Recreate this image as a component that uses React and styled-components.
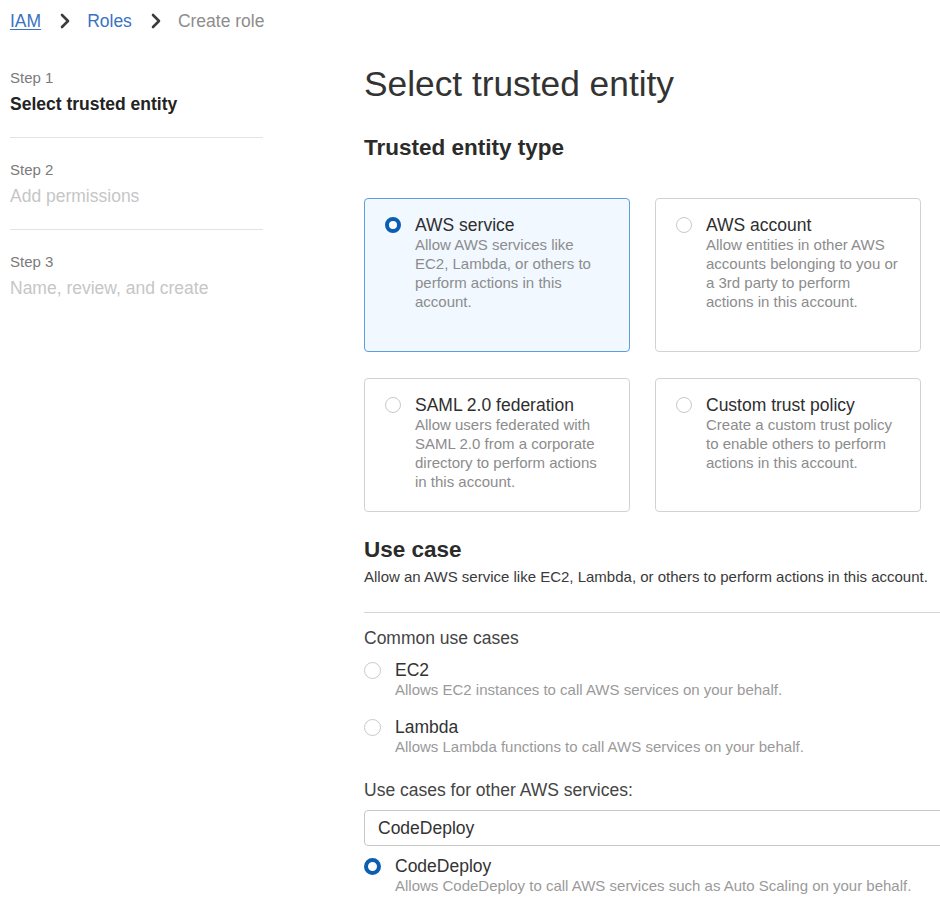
import React from "react";
import styled, { createGlobalStyle } from "styled-components";

const Global = createGlobalStyle`
  html, body { margin: 0; padding: 0; background: #fff; overflow: hidden; }
  body { font-family: "Liberation Sans", Arial, sans-serif; color: #333; }
  * { box-sizing: border-box; }
`;

const Page = styled.div`
  width: 980px;
  padding: 10px 0 0 10px;
`;

const Breadcrumbs = styled.nav`
  display: flex;
  align-items: center;
  height: 22px;
  font-size: 17.5px;
  line-height: 22px;
`;

const Crumb = styled.a`
  color: #3a73c4;
  text-decoration: ${(p) => (p.$underline ? "underline" : "none")};
  text-underline-offset: 2px;
`;

const CrumbCurrent = styled.span`
  color: #8d8d8d;
`;

const Chevron = styled.svg`
  width: 14px;
  height: 16px;
  margin: 0 15px 0 17px;
  flex: none;
`;

const Content = styled.div`
  display: flex;
  margin-top: 28px;
`;

const SideNav = styled.div`
  width: 253px;
  flex: none;
  padding-top: 8px;
`;

const StepBlock = styled.div`
  padding-bottom: 22px;
  border-bottom: ${(p) => (p.$last ? "none" : "1px solid #e3e3e3")};
  margin-bottom: 22px;
`;

const StepNum = styled.div`
  font-size: 15px;
  line-height: 20px;
  color: #7b7b7b;
`;

const StepTitle = styled.div`
  margin-top: 5px;
  font-size: 17.5px;
  line-height: 22px;
  font-weight: ${(p) => (p.$active ? 700 : 400)};
  color: ${(p) => (p.$active ? "#232323" : "#c6c6c6")};
`;

const Main = styled.main`
  margin-left: 101px;
  width: 620px;
  flex: none;
`;

const PageTitle = styled.h1`
  margin: 4px 0 0;
  font-size: 35.3px;
  line-height: 40px;
  font-weight: 400;
  color: #333;
`;

const SectionTitle = styled.h2`
  margin: ${(p) => p.$mt}px 0 0;
  font-size: 22.5px;
  line-height: 28px;
  font-weight: 700;
  color: #2b2b2b;
`;

const CardGrid = styled.div`
  margin-top: 36px;
  display: grid;
  grid-template-columns: 266px 266px;
  grid-template-rows: 154px 134px;
  column-gap: 25px;
  row-gap: 26px;
`;

const Card = styled.div`
  display: flex;
  gap: 14px;
  padding: 16px 20px 0 20px;
  border: 1px solid ${(p) => (p.$selected ? "#5e9ddf" : "#d2d2d2")};
  border-radius: 4px;
  background: ${(p) => (p.$selected ? "#f1f8ff" : "#fff")};
`;

const RadioDot = styled.span`
  flex: none;
  width: ${(p) => p.$size}px;
  height: ${(p) => p.$size}px;
  margin-top: 2px;
  border-radius: 50%;
  border: ${(p) => (p.$checked ? "4.5px solid #0b5eb2" : "1.5px solid #c9c9c9")};
  background: #fff;
`;

const CardText = styled.div`
  display: flex;
  flex-direction: column;
  width: 194px;
`;

const CardTitle = styled.div`
  font-size: 17.5px;
  line-height: 20px;
  color: #2e2e2e;
`;

const CardDesc = styled.div`
  font-size: 15px;
  line-height: 19px;
  color: #8c8c8c;
`;

const Description = styled.p`
  margin: 3px 0 0;
  font-size: 15px;
  line-height: 20px;
  color: #3a3a3a;
`;

const Divider = styled.hr`
  margin: 25px 0 0;
  border: none;
  border-top: 1px solid #d4d4d4;
`;

const GroupLabel = styled.div`
  margin-top: ${(p) => p.$mt}px;
  font-size: 17.5px;
  line-height: 22px;
  color: #444;
`;

const Option = styled.div`
  display: flex;
  gap: 14px;
  margin-top: ${(p) => p.$mt}px;
`;

const OptionLabel = styled.div`
  font-size: 17.5px;
  line-height: 20px;
  color: #333;
`;

const OptionDesc = styled.div`
  font-size: 15px;
  line-height: 20px;
  color: #9a9a9a;
`;

const Input = styled.div`
  margin-top: 9px;
  height: 36px;
  display: flex;
  align-items: center;
  padding-left: 13px;
  border: 1px solid #c7c7c7;
  border-radius: 4px;
  font-size: 17.5px;
  color: #333;
`;

const ChevronIcon = () => (
  <Chevron viewBox="0 0 14 16">
    <path d="M4 2 L10 8 L4 14" fill="none" stroke="#3c3c3c" strokeWidth="2.6" strokeLinecap="round" strokeLinejoin="round" />
  </Chevron>
);

const cards = [
  { title: "AWS service", desc: "Allow AWS services like EC2, Lambda, or others to perform actions in this account.", selected: true },
  { title: "AWS account", desc: "Allow entities in other AWS accounts belonging to you or a 3rd party to perform actions in this account." },
  { title: "SAML 2.0 federation", desc: "Allow users federated with SAML 2.0 from a corporate directory to perform actions in this account." },
  { title: "Custom trust policy", desc: "Create a custom trust policy to enable others to perform actions in this account." },
];

const steps = [
  { num: "Step 1", title: "Select trusted entity", active: true },
  { num: "Step 2", title: "Add permissions" },
  { num: "Step 3", title: "Name, review, and create", last: true },
];

export default function App() {
  return (
    <Page>
      <Global />
      <Breadcrumbs>
        <Crumb $underline href="#">IAM</Crumb>
        <ChevronIcon />
        <Crumb href="#">Roles</Crumb>
        <ChevronIcon />
        <CrumbCurrent>Create role</CrumbCurrent>
      </Breadcrumbs>
      <Content>
        <SideNav>
          {steps.map((s) => (
            <StepBlock key={s.num} $last={s.last}>
              <StepNum>{s.num}</StepNum>
              <StepTitle $active={s.active}>{s.title}</StepTitle>
            </StepBlock>
          ))}
        </SideNav>
        <Main>
          <PageTitle>Select trusted entity</PageTitle>
          <SectionTitle $mt={30}>Trusted entity type</SectionTitle>
          <CardGrid>
            {cards.map((c) => (
              <Card key={c.title} $selected={c.selected}>
                <RadioDot $size={16} $checked={c.selected} />
                <CardText>
                  <CardTitle>{c.title}</CardTitle>
                  <CardDesc>{c.desc}</CardDesc>
                </CardText>
              </Card>
            ))}
          </CardGrid>
          <SectionTitle $mt={24}>Use case</SectionTitle>
          <Description>Allow an AWS service like EC2, Lambda, or others to perform actions in this account.</Description>
          <Divider />
          <GroupLabel $mt={14}>Common use cases</GroupLabel>
          <Option $mt={11}>
            <RadioDot $size={17} />
            <div>
              <OptionLabel>EC2</OptionLabel>
              <OptionDesc>Allows EC2 instances to call AWS services on your behalf.</OptionDesc>
            </div>
          </Option>
          <Option $mt={17}>
            <RadioDot $size={17} />
            <div>
              <OptionLabel>Lambda</OptionLabel>
              <OptionDesc>Allows Lambda functions to call AWS services on your behalf.</OptionDesc>
            </div>
          </Option>
          <GroupLabel $mt={22}>Use cases for other AWS services:</GroupLabel>
          <Input>CodeDeploy</Input>
          <Option $mt={10}>
            <RadioDot $size={17} $checked />
            <div>
              <OptionLabel>CodeDeploy</OptionLabel>
              <OptionDesc>Allows CodeDeploy to call AWS services such as Auto Scaling on your behalf.</OptionDesc>
            </div>
          </Option>
        </Main>
      </Content>
    </Page>
  );
}
